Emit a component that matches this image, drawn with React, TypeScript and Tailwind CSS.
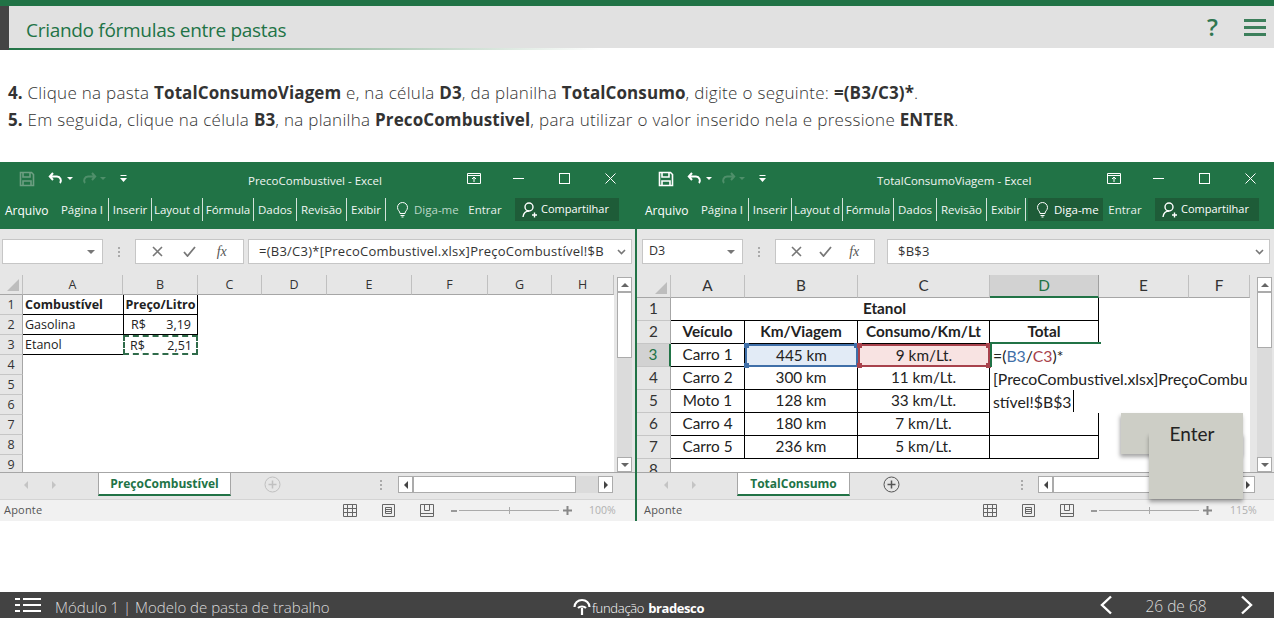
import React from "react";

const Save = ({ dim }: { dim?: boolean }) => (
  <svg width="16" height="16" viewBox="0 0 16 16" fill="none" stroke={dim ? "#6d9f82" : "#fff"} strokeWidth="1.6">
    <path d="M1.5 1.5h11l2 2v11h-13z" />
    <path d="M4 2v4h7V2M4 14.5V10h8v4.5" />
  </svg>
);

const Qat = ({ dim }: { dim?: boolean }) => (
  <div className="flex items-center">
    <div className="w-[20px] shrink-0">
      <Save dim={dim} />
    </div>
    <svg className="ml-[9px]" width="16" height="14" viewBox="0 0 16 14" fill="none" stroke="#fff" strokeWidth="2">
      <path d="M5 1 1.8 4.5 5 8M2 4.5h7a4 4 0 0 1 3 6.500" />
    </svg>
    <span className="ml-[3px] h-0 w-0 border-x-[3px] border-t-[3px] border-x-transparent border-t-white" />
    <svg className="ml-[8px]" width="16" height="14" viewBox="0 0 16 14" fill="none" stroke="#4f8f6a" strokeWidth="2">
      <path d="M11 1l3.200 3.500L11 8M14 4.500H7a4 4 0 0 0-3 6.500" />
    </svg>
    <span className="ml-[3px] h-0 w-0 border-x-[3px] border-t-[3px] border-x-transparent border-t-[#4f8f6a]" />
    <svg className="ml-[14px]" width="7" height="7" viewBox="0 0 7 7" fill="#fff">
      <rect x="0.5" y="0" width="6" height="1" />
      <path d="M0 3h7L3.500 7z" />
    </svg>
  </div>
);

const RibbonTab = ({ w, children }: { w: string; children: string }) => (
  <div className={`${w} h-[23px] shrink-0 overflow-hidden whitespace-nowrap border-r border-white/80 text-center leading-[23px]`}>{children}</div>
);

const Bulb = () => (
  <svg width="13" height="16" viewBox="0 0 13 16" fill="none" stroke="#fff" strokeWidth="1">
    <path d="M4 11.500C4 9 1.500 8.500 1.500 5.500a5 5 0 0 1 10 0c0 3-2.500 3.500-2.500 6zM4.500 13.500h4M5.500 15h2" />
  </svg>
);

const Person = () => (
  <svg width="16" height="16" viewBox="0 0 16 16" fill="none" stroke="#fff" strokeWidth="1.400">
    <circle cx="7" cy="5" r="4" />
    <path d="M1 15c.500-3.500 2.500-6 6-6M10 13h5M12.500 10.500v5" />
  </svg>
);

const Ribbon = ({ tell }: { tell?: boolean }) => (
  <div className="flex h-[32px] items-start pt-[1px] text-[11.500px] text-white">
    <div className="w-[48px] shrink-0 whitespace-nowrap text-[12px] leading-[25px]">Arquivo</div>
    <div className="flex shrink-0 text-[#f2f7f4]">
      <RibbonTab w="w-[56px] pl-[3px]">Página I</RibbonTab>
      <RibbonTab w="w-[43px]">Inserir</RibbonTab>
      <RibbonTab w="w-[51px]">Layout d</RibbonTab>
      <RibbonTab w="w-[51px]">Fórmula</RibbonTab>
      <RibbonTab w="w-[43px]">Dados</RibbonTab>
      <RibbonTab w="w-[50px]">Revisão</RibbonTab>
      <RibbonTab w="w-[39px]">Exibir</RibbonTab>
    </div>
    <div className={`ml-[2px] flex h-[23px] w-[75px] shrink-0 items-center gap-[5px] whitespace-nowrap pl-[8px] ${tell ? "bg-[#1e5c38] text-white" : "text-[#bcd8c8]"}`}>
      <Bulb />
      <span>Diga-me</span>
    </div>
    <div className="w-[42px] shrink-0 pl-[2px] text-center leading-[23px] text-[#e8f1ec]">Entrar</div>
    <div className="ml-[10px] flex h-[23px] w-[104px] shrink-0 items-center gap-[3px] whitespace-nowrap bg-[#1e5c38] pl-[7px] text-[11px]">
      <Person />
      <span>Compartilhar</span>
    </div>
  </div>
);

const WindowButtons = () => (
  <div className="flex items-center text-white">
    <svg width="14" height="11" viewBox="0 0 14 11" fill="none" stroke="#fff">
      <path d="M.5.500h13v10H.5zM.5 2.500h13M7 9V4M5 6l2-2 2 2" />
    </svg>
    <svg className="ml-[32px]" width="11" height="1" viewBox="0 0 11 1" fill="#fff">
      <rect width="11" height="1" />
    </svg>
    <svg className="ml-[35px]" width="11" height="11" viewBox="0 0 11 11" fill="none" stroke="#fff">
      <rect x=".5" y=".5" width="10" height="10" />
    </svg>
    <svg className="ml-[35px]" width="11" height="11" viewBox="0 0 11 11" fill="none" stroke="#fff">
      <path d="M.5.500l10 10M10.500.500l-10 10" />
    </svg>
  </div>
);

const Caret = () => <span className="h-0 w-0 border-x-[4px] border-t-[4px] border-x-transparent border-t-[#777]" />;

const FormulaBar = ({
  pl,
  name,
  formula,
  fxW,
  inputW,
}: {
  pl: string;
  name: string;
  formula: string;
  fxW: string;
  inputW: string;
}) => (
  <div className={`flex h-[46px] items-start bg-[#e6e6e6] pt-[10px] ${pl} font-['Open_Sans',sans-serif] text-[13px] text-[#333]`}>
    <div className="flex h-[25px] w-[101px] shrink-0 items-center justify-between border border-[#c6c6c6] bg-white pl-[6px] pr-[7px]">
      <span className="text-[12.500px]">{name}</span>
      <Caret />
    </div>
    <div className="flex w-[32px] shrink-0 flex-col items-center justify-center">
      <div className="flex h-[25px] flex-col justify-center gap-[2px]">
        <span className="h-[2px] w-[2px] bg-[#aaa]" />
        <span className="h-[2px] w-[2px] bg-[#aaa]" />
        <span className="h-[2px] w-[2px] bg-[#aaa]" />
      </div>
    </div>
    <div className={`flex h-[25px] ${fxW} shrink-0 items-center justify-around border border-[#c6c6c6] bg-white px-[6px]`}>
      <svg width="11" height="11" viewBox="0 0 11 11" fill="none" stroke="#777" strokeWidth="1.600">
        <path d="M1 1l9 9M10 1l-9 9" />
      </svg>
      <svg width="13" height="11" viewBox="0 0 13 11" fill="none" stroke="#777" strokeWidth="1.800">
        <path d="M1 6l3.500 4L12 1" />
      </svg>
      <span className="font-['Liberation_Serif',serif] text-[14px] italic text-[#555]">fx</span>
    </div>
    <div className={`ml-[4px] flex h-[25px] ${inputW} shrink-0 items-center justify-between border border-[#c6c6c6] bg-white pl-[10px] pr-[5px]`}>
      <span className="whitespace-nowrap tracking-[0.25px]">{formula}</span>
      <svg width="9" height="6" viewBox="0 0 9 6" fill="none" stroke="#777" strokeWidth="1.600">
        <path d="M1 1l3.500 3.500L8 1" />
      </svg>
    </div>
  </div>
);

const ArrowBtn = ({ dir }: { dir: "up" | "down" }) => (
  <div className="flex h-[15px] w-[15px] shrink-0 items-center justify-center border border-[#ababab] bg-white">
    {dir === "up" && <span className="h-0 w-0 border-x-[4px] border-b-[4px] border-x-transparent border-b-[#666]" />}
    {dir === "down" && <span className="h-0 w-0 border-x-[4px] border-t-[4px] border-x-transparent border-t-[#666]" />}
  </div>
);

const VScroll = ({ thumb }: { thumb: string }) => (
  <div className="flex h-[195px] w-[15px] shrink-0 flex-col">
    <ArrowBtn dir="up" />
    <div className={`${thumb} w-[15px] shrink-0 border border-[#ababab] bg-white`} />
    <div className="flex-1 bg-[#dbdbdb]" />
    <ArrowBtn dir="down" />
  </div>
);

const SheetTabs = ({
  label,
  navPl,
  tabMl,
  tabW,
  plusMl,
  plusColor,
  dotsMl,
  scrollEl,
}: {
  label: string;
  navPl: string;
  tabMl: string;
  tabW: string;
  plusMl: string;
  plusColor: string;
  dotsMl: string;
  scrollEl: React.ReactNode;
}) => (
  <div className={`flex h-[27px] items-start border-t border-[#a6a6a6] bg-[#e6e6e6] ${navPl}`}>
    <div className="flex h-[24px] items-center gap-[24px]">
      <span className="h-0 w-0 border-y-[4px] border-r-[4px] border-y-transparent border-r-[#c4c4c4]" />
      <span className="h-0 w-0 border-y-[4px] border-l-[4px] border-y-transparent border-l-[#c4c4c4]" />
    </div>
    <div
      className={`${tabMl} ${tabW} -mt-px flex h-[24px] shrink-0 items-center justify-center border-x border-b-[2px] border-t border-x-[#a6a6a6] border-b-[#217346] border-t-[#a6a6a6] bg-white font-['Open_Sans',sans-serif] text-[12px] font-bold text-[#217346]`}
    >
      {label}
    </div>
    <svg className={`${plusMl} mt-[3px] shrink-0`} width="17" height="17" viewBox="0 0 17 17" fill="none" stroke={plusColor}>
      <circle cx="8.500" cy="8.500" r="7.500" />
      <path d="M8.500 4.500v8M4.500 8.500h8" strokeWidth="1.500" />
    </svg>
    <div className={`${dotsMl} flex h-[24px] shrink-0 flex-col justify-center gap-[2px]`}>
      <span className="h-[2px] w-[2px] bg-[#aaa]" />
      <span className="h-[2px] w-[2px] bg-[#aaa]" />
      <span className="h-[2px] w-[2px] bg-[#aaa]" />
    </div>
    {scrollEl}
  </div>
);

const StatusIcons = () => (
  <div className="flex items-center">
    <svg width="14" height="13" viewBox="0 0 14 13" fill="none" stroke="#666">
      <path d="M.5.500h13v12H.5zM.5 4.500h13M.5 8.500h13M4.500.500v12M9.500.500v12" />
    </svg>
    <svg className="ml-[25px]" width="13" height="13" viewBox="0 0 13 13" fill="none" stroke="#666">
      <path d="M.5.500h12v12H.5zM3.500 3.500h6v6h-6zM3.500 5.500h6M3.500 7.500h6" />
    </svg>
    <svg className="ml-[25px]" width="14" height="13" viewBox="0 0 14 13" fill="none" stroke="#666">
      <path d="M.5.500h13v12H.5zM4.500.500v6h5v-6M.5 9.500h13" />
    </svg>
  </div>
);

const StatusBar = ({ pl, iconsMl, zoom, zoomMl }: { pl: string; iconsMl: string; zoom: string; zoomMl: string }) => (
  <div className={`flex h-[22px] items-center border-t border-[#d4d4d4] bg-[#f1f1f1] ${pl} font-['Open_Sans',sans-serif] text-[11px] text-[#555]`}>
    <span className="w-[40px] shrink-0 tracking-[0.2px]">Aponte</span>
    <div className={`${iconsMl} shrink-0`}>
      <StatusIcons />
    </div>
    <div className="ml-[17px] flex shrink-0 items-center">
      <span className="h-[2px] w-[6px] bg-[#999]" />
      <div className="relative ml-[2px] h-px w-[100px] bg-[#aaa]">
        <span className="absolute left-[50px] top-[-3px] h-[7px] w-px bg-[#aaa]" />
      </div>
      <svg className="ml-[4px]" width="9" height="9" viewBox="0 0 9 9" fill="#888">
        <path d="M3.500 0h2v3.500H9v2H5.500V9h-2V5.500H0v-2h3.500z" />
      </svg>
    </div>
    <span className={`${zoomMl} shrink-0 text-[10.500px] text-[#b0b0b0]`}>{zoom}</span>
  </div>
);

const ColHead = ({ children, active }: { children?: string; active?: boolean }) => (
  <div
    className={`flex items-center justify-center border-r ${
      active ? "border-b-2 border-r-[#a0a0a0] border-b-[#217346] bg-[#d2d2d2] text-[#217346]" : "border-b border-r-[#c0c0c0] border-b-[#a6a6a6] bg-[#e6e6e6] text-[#333]"
    }`}
  >
    {children}
  </div>
);

const RowHead = ({ children, active }: { children: number; active?: boolean }) => (
  <div
    className={`flex items-center justify-center border-b border-r border-b-[#c6c6c6] ${
      active ? "border-r-[2px] border-r-[#217346] bg-[#d2d2d2] text-[#217346]" : "border-r-[#a6a6a6] bg-[#e6e6e6] text-[#333]"
    }`}
  >
    {children}
  </div>
);

const Corner = () => (
  <div className="flex items-end justify-end border-b border-r border-b-[#a6a6a6] border-r-[#c0c0c0] bg-[#e6e6e6] p-[3px]">
    <span className="h-0 w-0 border-b-[12px] border-l-[12px] border-b-[#bdbdbd] border-l-transparent" />
  </div>
);

const LeftSheet = () => {
  const L = "flex items-center pl-[2px] border-b border-black bg-white";
  const B = "flex items-center border-b border-x border-black bg-white";
  return (
    <div className="grid h-[197px] w-[614px] shrink-0 grid-cols-[23px_100px_75px_64px_65px_85px_76px_64px_62px] grid-rows-[20px_20px_20px_20px_20px_20px_20px_20px_20px_20px] overflow-hidden font-['Open_Sans',sans-serif] text-[12.500px] leading-none text-[#222] [&>div]:pt-[2px]">
      <Corner />
      {["A", "B", "C", "D", "E", "F", "G", "H"].map((c) => (
        <ColHead key={c}>{c}</ColHead>
      ))}
      <RowHead>{1}</RowHead>
      <div className={`${L} font-bold`}>Combustível</div>
      <div className={`${B} justify-center whitespace-nowrap font-bold`}>Preço/Litro</div>
      <div className="col-span-6 bg-white" />
      <RowHead>{2}</RowHead>
      <div className={L}>Gasolina</div>
      <div className={`${B} justify-between pl-[7px] pr-[6px]`}>
        <span>R$</span>
        <span>3,19</span>
      </div>
      <div className="col-span-6 bg-white" />
      <RowHead>{3}</RowHead>
      <div className={L}>Etanol</div>
      <div className="relative flex items-center justify-between bg-white pl-[7px] pr-[6px]">
        <span>R$</span>
        <span>2,51</span>
        <span className="absolute inset-0 border-2 border-dashed border-[#2f6b4a]" />
      </div>
      <div className="col-span-6 bg-white" />
      {[4, 5, 6, 7, 8, 9].map((n) => (
        <React.Fragment key={n}>
          <RowHead>{n}</RowHead>
          <div className="col-span-8 bg-white" />
        </React.Fragment>
      ))}
    </div>
  );
};

const Handle = ({ cls }: { cls: string }) => <span className={`absolute h-[5px] w-[5px] ${cls}`} />;

const RightSheet = () => {
  const C = "flex items-center justify-center border-b border-r border-black bg-white";
  const rows = [
    { n: 4, a: "Carro 2", b: "300 km", c: "11 km/Lt." },
    { n: 5, a: "Moto 1", b: "128 km", c: "33 km/Lt." },
    { n: 6, a: "Carro 4", b: "180 km", c: "7 km/Lt." },
    { n: 7, a: "Carro 5", b: "236 km", c: "5 km/Lt." },
  ];
  return (
    <div className="grid h-[197px] w-[613px] shrink-0 grid-cols-[34px_74px_113px_132px_109px_90px_61px] grid-rows-[23px_23px_23px_23px_23px_23px_23px_23px_23px] overflow-hidden font-['Lato',sans-serif] text-[15.300px] leading-none text-[#222]">
      <Corner />
      {["A", "B", "C"].map((c) => (
        <ColHead key={c}>{c}</ColHead>
      ))}
      <ColHead active>D</ColHead>
      <ColHead>E</ColHead>
      <ColHead>F</ColHead>

      <RowHead>{1}</RowHead>
      <div className={`${C} col-span-4 font-bold`}>Etanol</div>
      <div className="col-span-2 bg-white" />

      <RowHead>{2}</RowHead>
      <div className={`${C} font-bold`}>Veículo</div>
      <div className={`${C} font-bold`}>Km/Viagem</div>
      <div className={`${C} font-bold`}>Consumo/Km/Lt</div>
      <div className={`${C} font-bold`}>Total</div>
      <div className="col-span-2 bg-white" />

      <RowHead active>{3}</RowHead>
      <div className={C}>Carro 1</div>
      <div className="relative flex items-center justify-center border-2 border-[#3f6fa8] bg-[#e2ebf6]">
        445 km
        <Handle cls="-left-[3px] -top-[3px] bg-[#3f6fa8]" />
        <Handle cls="-right-[3px] -top-[3px] bg-[#3f6fa8]" />
        <Handle cls="-left-[3px] -bottom-[3px] bg-[#3f6fa8]" />
      </div>
      <div className="relative flex items-center justify-center border-2 border-[#a8424c] bg-[#f8e3e2]">
        9 km/Lt.
        <Handle cls="-left-[3px] -top-[3px] bg-[#a8424c]" />
        <Handle cls="-right-[3px] -top-[3px] bg-[#a8424c]" />
        <Handle cls="-left-[3px] -bottom-[3px] bg-[#a8424c]" />
        <Handle cls="-right-[3px] -bottom-[3px] bg-[#a8424c]" />
      </div>
      <div className="relative border-l-2 border-[#217346] bg-white">
        <div className="absolute -left-[2px] top-[-2px] h-[2px] w-[111px] bg-[#217346]" />
        <div className="absolute left-[1px] top-0 z-10 w-[262px] whitespace-nowrap text-[15.800px] leading-[23px]">
          <div>
            =(<span className="text-[#3f6fa8]">B3</span>/<span className="text-[#a8424c]">C3</span>)*
          </div>
          <div>[PrecoCombustivel.xlsx]PreçoCombu</div>
          <div>
            stível!$B$3<span className="ml-px inline-block h-[22px] w-px bg-black align-top" />
          </div>
        </div>
      </div>
      <div className="col-span-2 bg-white" />

      {rows.map((r) => (
        <React.Fragment key={r.n}>
          <RowHead>{r.n}</RowHead>
          <div className={C}>{r.a}</div>
          <div className={C}>{r.b}</div>
          <div className={C}>{r.c}</div>
          {r.n < 6 ? <div className="bg-white" /> : <div className={C} />}
          <div className="col-span-2 bg-white" />
        </React.Fragment>
      ))}
      <RowHead>{8}</RowHead>
      <div className="col-span-6 bg-white" />
    </div>
  );
};

const HScroll = ({ cls, thumb }: { cls: string; thumb: string }) => (
  <div className={`${cls} mt-[3px] flex h-[17px] shrink-0`}>
    <div className="flex h-[17px] w-[15px] items-center justify-center border border-[#ababab] bg-white">
      <span className="h-0 w-0 border-y-[4px] border-r-[4px] border-y-transparent border-r-[#444]" />
    </div>
    <div className={`${thumb} h-[17px] border border-[#ababab] bg-white`} />
    <div className="flex-1 bg-[#dbdbdb]" />
    <div className="flex h-[17px] w-[15px] items-center justify-center border border-[#ababab] bg-white">
      <span className="h-0 w-0 border-y-[4px] border-l-[4px] border-y-transparent border-l-[#444]" />
    </div>
  </div>
);

const Enter = () => (
  <div className="absolute left-[1121px] top-[251px] h-[86px] w-[122px] font-['Lato',sans-serif] text-[19px] text-[#222]">
    <div className="absolute left-0 top-0 h-[41px] w-[122px] bg-[#cdcec6] shadow-[-1px_3px_4px_rgba(0,0,0,0.35)]" />
    <div className="absolute left-[28px] top-[20px] h-[66px] w-[94px] bg-[#cdcec6] shadow-[0_3px_4px_rgba(0,0,0,0.35)]" />
    <div className="absolute left-[28px] top-0 h-[48px] w-[94px] bg-[#cdcec6]" />
    <div className="absolute left-0 top-[1px] flex h-[41px] w-[122px] items-center justify-center pl-[20px]">Enter</div>
  </div>
);

export default function App() {
  const ui = "font-['Open_Sans',sans-serif]";
  const bold = "font-bold tracking-[0.1px]";
  return (
    <div className={`flex h-[618px] w-[1274px] flex-col overflow-hidden bg-white ${ui}`}>
      <div className="h-[6px] shrink-0 bg-[#217346]" />
      <header className="relative flex h-[42px] shrink-0 items-center justify-between border-l-[9px] border-[#444] bg-[#e1e1e1] pl-[17px] pr-[8px]">
        <h1 className="pt-[6px] text-[19px] font-normal tracking-[-0.3px] text-[#217346]">Criando fórmulas entre pastas</h1>
        <div className="flex items-center">
          <span className="text-[24px] font-semibold leading-none text-[#2f7650]">?</span>
          <div className="ml-[26px] flex w-[22px] flex-col gap-[4px]">
            <span className="h-[3px] bg-[#3c7f5b]" />
            <span className="h-[3px] bg-[#3c7f5b]" />
            <span className="h-[3px] bg-[#3c7f5b]" />
          </div>
        </div>
      </header>
      <div className="flex h-[2px] shrink-0">
        <div className="h-full w-[9px] bg-[#444]" />
        <div className="h-full w-[590px] bg-gradient-to-r from-[#217346] to-white" />
      </div>

      <section className="h-[112px] shrink-0 pl-[8px] pt-[29px] text-[17px] font-light leading-[27px] tracking-[0.3px] text-[#333]">
        <p className="whitespace-nowrap">
          <b className={bold}>4.</b> Clique na pasta <b className={bold}>TotalConsumoViagem</b> e, na célula <b className={bold}>D3</b>, da planilha{" "}
          <b className={bold}>TotalConsumo</b>, digite o seguinte: <b className={bold}>=(B3/C3)*</b>.
        </p>
        <p className="whitespace-nowrap">
          <b className={bold}>5.</b> Em seguida, clique na célula <b className={bold}>B3</b>, na planilha <b className={bold}>PrecoCombustivel</b>, para utilizar o valor inserido nela e pressione{" "}
          <b className={bold}>ENTER</b>.
        </p>
      </section>

      <div className="relative flex h-[359px] shrink-0 border-b-2 border-[#217346]">
        <div className="w-[635px] shrink-0">
          <div className="flex h-[35px] items-center bg-[#217346] pb-[2px] pl-[19px] text-[11.500px] text-white">
            <div className="w-[229px] shrink-0">
              <Qat dim />
            </div>
            <span className="mt-[5px] w-[140px] shrink-0 whitespace-nowrap text-[#f0f5f2]">PrecoCombustivel - Excel</span>
            <div className="ml-[79px] shrink-0">
              <WindowButtons />
            </div>
          </div>
          <div className="bg-[#217346] pl-[5px]">
            <Ribbon />
          </div>
          <FormulaBar pl="pl-[2px]" name="" formula="=(B3/C3)*[PrecoCombustivel.xlsx]PreçoCombustível!$B" fxW="w-[109px]" inputW="w-[384px]" />
          <div className="flex h-[197px] bg-[#e6e6e6]">
            <LeftSheet />
            <div className="ml-[3px]">
              <div className="h-[2px]" />
              <VScroll thumb="h-[66px]" />
            </div>
          </div>
          <SheetTabs
            label="PreçoCombustível"
            navPl="pl-[24px]"
            tabMl="ml-[42px]"
            tabW="w-[133px]"
            plusMl="ml-[33px]"
            plusColor="#c0c0c0"
            dotsMl="ml-[99px]"
            scrollEl={<HScroll cls="ml-[16px] w-[215px]" thumb="w-[163px]" />}
          />
          <StatusBar pl="pl-[4px]" iconsMl="ml-[299px]" zoom="100%" zoomMl="ml-[17px]" />
        </div>
        <div className="w-[2px] shrink-0 bg-[#217346]" />
        <div className="w-[637px] shrink-0">
          <div className="flex h-[35px] items-center bg-[#217346] pb-[2px] pl-[21px] text-[11.500px] text-white">
            <div className="w-[219px] shrink-0">
              <Qat />
            </div>
            <span className="mt-[5px] w-[155px] shrink-0 whitespace-nowrap text-[#f0f5f2]">TotalConsumoViagem - Excel</span>
            <div className="ml-[75px] shrink-0">
              <WindowButtons />
            </div>
          </div>
          <div className="bg-[#217346] pl-[8px]">
            <Ribbon tell />
          </div>
          <FormulaBar pl="pl-[5px]" name="D3" formula="$B$3" fxW="w-[100px]" inputW="w-[383px] ml-[12px]" />
          <div className="flex h-[197px] bg-[#e6e6e6]">
            <RightSheet />
            <div className="ml-[7px]">
              <div className="h-[2px]" />
              <VScroll thumb="h-[56px]" />
            </div>
          </div>
          <SheetTabs
            label="TotalConsumo"
            navPl="pl-[27px]"
            tabMl="ml-[41px]"
            tabW="w-[113px]"
            plusMl="ml-[33px]"
            plusColor="#555"
            dotsMl="ml-[121px]"
            scrollEl={<HScroll cls="ml-[15px] w-[217px]" thumb="w-[120px]" />}
          />
          <StatusBar pl="pl-[7px]" iconsMl="ml-[299px]" zoom="115%" zoomMl="ml-[18px]" />
        </div>
        <Enter />
      </div>

      <div className="flex-1" />

      <footer className="flex h-[26px] shrink-0 items-center bg-[#434343] text-[#dcdcdc]">
        <div className="ml-[15px] flex w-[26px] flex-col gap-[4px]">
          {[0, 1, 2].map((i) => (
            <div key={i} className="flex gap-[3px]">
              <span className="h-[2px] w-[5px] bg-white" />
              <span className="h-[2px] w-[18px] bg-white" />
            </div>
          ))}
        </div>
        <span className="ml-[14px] w-[278px] whitespace-nowrap pt-[4px] text-[15px] font-light">Módulo 1 | Modelo de pasta de trabalho</span>
        <div className="ml-[240px] flex w-[128px] items-end whitespace-nowrap pt-[4px] text-[13px] leading-[18px] text-white">
          <svg className="mb-[1px] shrink-0" width="18" height="18" viewBox="0 0 18 18" fill="none" stroke="#fff" strokeWidth="2.200">
            <path d="M1.500 9a7.500 7 0 0 1 15 0M5 10c2-2 6-2 8 0M9 10v7" />
          </svg>
          <span className="ml-[1px] tracking-[-0.3px] font-light">fundação</span>
          <span className="ml-[4px] font-bold tracking-[-0.4px]">bradesco</span>
        </div>
        <svg className="ml-[398px]" width="14" height="20" viewBox="0 0 14 20" fill="none" stroke="#fff" strokeWidth="2.400">
          <path d="M12 1.500 3 10l9 8.500" />
        </svg>
        <span className="ml-[30px] w-[66px] whitespace-nowrap pt-[3px] text-center text-[15.500px] font-light">26 de 68</span>
        <svg className="ml-[31px]" width="14" height="20" viewBox="0 0 14 20" fill="none" stroke="#fff" strokeWidth="2.400">
          <path d="M2 1.500 11 10l-9 8.500" />
        </svg>
      </footer>
    </div>
  );
}
